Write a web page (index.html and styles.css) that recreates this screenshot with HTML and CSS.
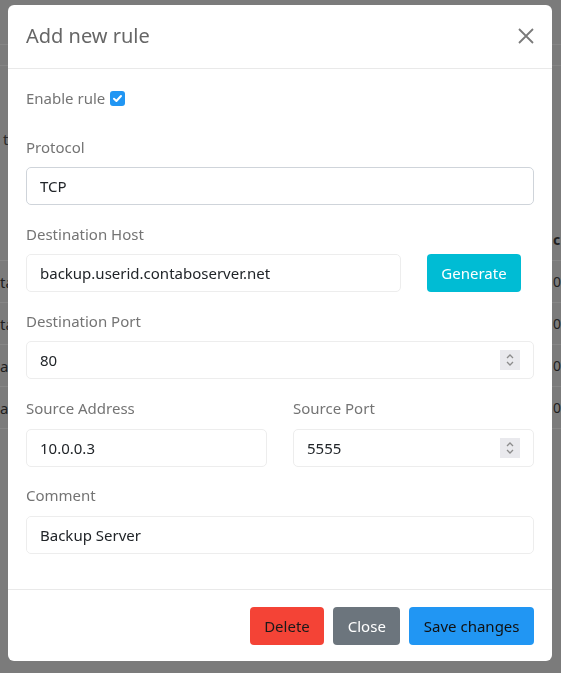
FILE: index.html
```html
<!DOCTYPE html>
<html lang="en">
<head>
<meta charset="utf-8">
<title>Add new rule</title>
<link rel="stylesheet" href="styles.css">
</head>
<body>
<div class="page">
  <div class="page-nav"></div>
  <div class="page-sub"></div>
  <div class="page-title">t</div>
  <div class="table">
    <div class="trow thead"><span class="l"></span><span class="r">c</span></div>
    <div class="trow"><span class="l">ta</span><span class="r">0.</span></div>
    <div class="trow"><span class="l">ta</span><span class="r">0.</span></div>
    <div class="trow"><span class="l">a</span><span class="r">0.</span></div>
    <div class="trow"><span class="l">ab</span><span class="r">0.</span></div>
  </div>
</div>

<div class="overlay">
  <div class="modal">
    <div class="modal-header">
      <h5 class="modal-title">Add new rule</h5>
      <button class="btn-close" aria-label="Close">
        <svg width="18" height="18" viewBox="0 0 18 18"><path d="M2 2 L16 16 M16 2 L2 16" stroke="#7a7a7a" stroke-width="1.8" fill="none"/></svg>
      </button>
    </div>
    <div class="modal-body">
      <div class="enable-row">
        <span class="label-inline">Enable rule</span>
        <span class="checkbox">
          <svg width="15" height="15" viewBox="0 0 15 15"><path d="M4 7.8 L6.4 10 L11 5" stroke="#fff" stroke-width="2" fill="none" stroke-linecap="round" stroke-linejoin="round"/></svg>
        </span>
      </div>

      <div class="group">
        <label class="label">Protocol</label>
        <div class="field field-select">TCP</div>
      </div>

      <div class="group">
        <label class="label">Destination Host</label>
        <div class="row-host">
          <div class="field">backup.userid.contaboserver.net</div>
          <div><button class="btn btn-info">Generate</button></div>
        </div>
      </div>

      <div class="group">
        <label class="label">Destination Port</label>
        <div class="field field-number"><span>80</span><span class="spinner"><svg width="20" height="20" viewBox="0 0 20 20"><path d="M7 8 L10 5 L13 8 M7 12 L10 15 L13 12" stroke="#8c8c8c" stroke-width="1.3" fill="none"/></svg></span></div>
      </div>

      <div class="group group-tight row-two">
        <div>
          <label class="label label-tall">Source Address</label>
          <div class="field">10.0.0.3</div>
        </div>
        <div>
          <label class="label label-tall">Source Port</label>
          <div class="field field-number"><span>5555</span><span class="spinner"><svg width="20" height="20" viewBox="0 0 20 20"><path d="M7 8 L10 5 L13 8 M7 12 L10 15 L13 12" stroke="#8c8c8c" stroke-width="1.3" fill="none"/></svg></span></div>
        </div>
      </div>

      <div class="group">
        <label class="label label-tall">Comment</label>
        <div class="field">Backup Server</div>
      </div>
    </div>
    <div class="modal-footer">
      <button class="btn btn-danger">Delete</button>
      <button class="btn btn-secondary">Close</button>
      <button class="btn btn-primary">Save changes</button>
    </div>
  </div>
</div>
</body>
</html>
```

FILE: styles.css
```css
* { box-sizing: border-box; }

html, body {
  margin: 0;
  padding: 0;
  width: 561px;
  height: 673px;
  overflow: hidden;
}

body {
  background: #7b7b7b;
  font-family: "Noto Sans", "Open Sans", sans-serif;
  font-size: 15px;
  color: #212529;
}

/* underlying page (dimmed) */
.page {
  color: #1f1f1f;
  line-height: 22px;
}
.page-nav {
  height: 45px;
  border-bottom: 1px solid #858585;
}
.page-sub {
  height: 21px;
  border-bottom: 1px solid #858585;
}
.page-title {
  margin-top: 62px;
  padding-left: 3px;
  color: #2a2a2a;
}
.table {
  margin-top: 69px;
}
.trow {
  height: 42px;
  border-bottom: 1px solid #868686;
  display: flex;
  align-items: center;
  justify-content: space-between;
  white-space: nowrap;
  overflow: hidden;
}
.trow .l { padding-left: 0; }
.trow .r {
  width: 8px;
  flex: none;
  font-size: 14px;
}
.thead .r { font-weight: 700; }

/* modal */
.overlay {
  position: fixed;
  inset: 0;
}
.modal {
  margin: 5px 0 0 8px;
  width: 544px;
  background: #fff;
  border-radius: 6px;
  overflow: hidden;
}
.modal-header {
  display: flex;
  align-items: center;
  justify-content: space-between;
  padding: 16px 18px 17px;
  border-bottom: 1px solid #e9e9e9;
}
.modal-title {
  margin: 0;
  font-size: 20px;
  font-weight: 400;
  line-height: 30px;
  color: #666;
}
.btn-close {
  border: 0;
  background: none;
  padding: 0;
  width: 18px;
  height: 18px;
  display: flex;
  margin-right: -1px;
}

.modal-body {
  padding: 18px 18px 17px;
}
.enable-row {
  display: flex;
  align-items: center;
  gap: 5px;
  line-height: 22px;
  margin-bottom: 27px;
  color: #747474;
}
.checkbox {
  width: 15px;
  height: 15px;
  border-radius: 3px;
  background: #2196f3;
  display: flex;
}

.group {
  margin-bottom: 18px;
}
.group-tight {
  margin-bottom: 17px;
}
.label {
  display: block;
  line-height: 22px;
  margin-bottom: 9px;
  color: #747474;
}
.label-tall {
  margin-bottom: 10px;
}
.field {
  height: 38px;
  border: 1px solid #ededed;
  border-radius: 5px;
  padding: 0 13px;
  display: flex;
  align-items: center;
  color: #212529;
  background: #fff;
  white-space: nowrap;
}
.field-select {
  border-color: #cfd4da;
}
.field-number {
  justify-content: space-between;
}
.spinner {
  width: 20px;
  height: 20px;
  background: #e9e9ed;
  display: flex;
}

.row-host {
  display: grid;
  grid-template-columns: 1fr 107px;
  gap: 26px;
}
.row-two {
  display: grid;
  grid-template-columns: 1fr 1fr;
  gap: 26px;
}

.btn {
  height: 38px;
  border: 0;
  border-radius: 4px;
  padding: 0 14.5px;
  font-family: "Noto Sans", "Open Sans", sans-serif;
  font-size: 15px;
  line-height: 22px;
}
.btn-info {
  background: #00bcd4;
  color: #fff;
  width: 94px;
  padding: 0;
}
.btn-danger {
  background: #f44336;
  color: #1a1a1a;
}
.btn-secondary {
  background: #6c757d;
  color: #fff;
}
.btn-primary {
  background: #2196f3;
  color: #111;
}

.modal-footer {
  display: flex;
  justify-content: flex-end;
  gap: 9px;
  padding: 17px 18px 16px;
  border-top: 1px solid #e9e9e9;
}
```
